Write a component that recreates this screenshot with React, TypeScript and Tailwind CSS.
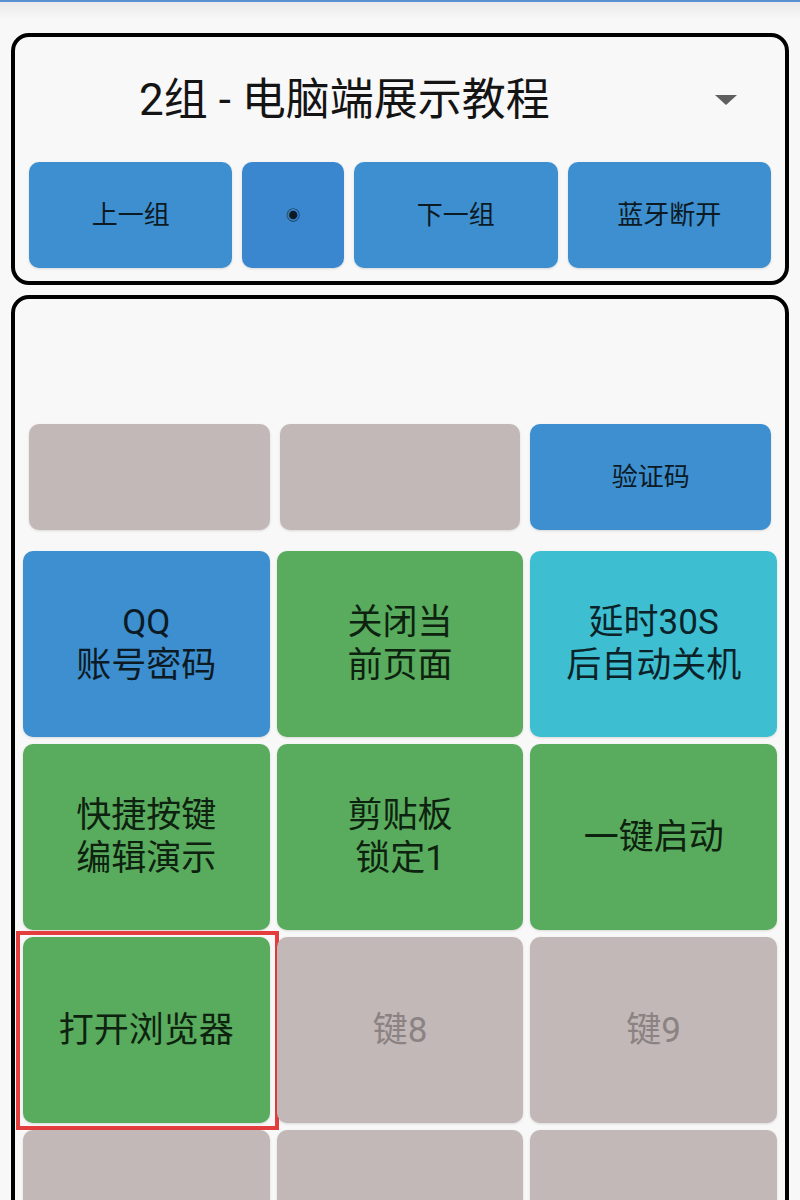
import React from 'react';

type Tile = {
    lines: string[];
    color: 'blue' | 'green' | 'cyan' | 'gray';
    marked?: boolean;
};

const tileColors: Record<Tile['color'], string> = {
    blue: 'bg-[#3d8fd0] text-[#0c1a24]',
    green: 'bg-[#59ab5d] text-[#0d220f]',
    cyan: 'bg-[#3ebfd1] text-[#0b2228]',
    gray: 'bg-[#c2b8b7] text-[#8b8383]',
};

const tiles: Tile[] = [
    { lines: ['QQ', '账号密码'], color: 'blue' },
    { lines: ['关闭当', '前页面'], color: 'green' },
    { lines: ['延时30S', '后自动关机'], color: 'cyan' },
    { lines: ['快捷按键', '编辑演示'], color: 'green' },
    { lines: ['剪贴板', '锁定1'], color: 'green' },
    { lines: ['一键启动'], color: 'green' },
    { lines: ['打开浏览器'], color: 'green', marked: true },
    { lines: ['键8'], color: 'gray' },
    { lines: ['键9'], color: 'gray' },
    // next row is only partly on screen
    { lines: [], color: 'gray' },
    { lines: [], color: 'gray' },
    { lines: [], color: 'gray' },
];

const font = { fontFamily: 'Roboto, "Noto Sans CJK SC", sans-serif' };

export default function App() {
    return (
        <div className="min-h-[1200px] bg-[#f8f8f8] overflow-hidden" style={font}>
            {/* status strip */}
            <div className="h-[2px] bg-[#5a8fd0]" />
            <div className="h-[18px] bg-gradient-to-b from-[#e9e9e9] to-[#f8f8f8]" />

            <div className="px-[11px] pt-[13px] flex flex-col gap-[10px]">
                {/* group selector */}
                <div className="border-4 border-black rounded-[18px] px-[14px] pb-[13px]">
                    <div className="h-[125px] flex items-center pl-[110px] pr-[34px]">
                        <span className="text-[44px] leading-none text-[#141414]">2组 - 电脑端展示教程</span>
                        <span className="ml-auto w-0 h-0 border-x-[11px] border-x-transparent border-t-[10px] border-t-[#5f5f5f]" />
                    </div>
                    <div className="flex gap-[10px] h-[106px] text-[26px] text-[#0c1a24]">
                        <button className="flex-[2] rounded-[10px] bg-[#3d8fd0] shadow-sm">上一组</button>
                        <button className="flex-1 rounded-[10px] bg-[#3a87cf] text-[14px] shadow-sm">◉</button>
                        <button className="flex-[2] rounded-[10px] bg-[#3d8fd0] shadow-sm">下一组</button>
                        <button className="flex-[2] rounded-[10px] bg-[#3d8fd0] shadow-sm">蓝牙断开</button>
                    </div>
                </div>

                {/* key board */}
                <div className="border-4 border-black rounded-[18px] pb-6">
                    <div className="px-[14px] pt-[125px]">
                        <div className="grid grid-cols-3 gap-[10px] h-[106px]">
                            <div className="rounded-[10px] bg-[#c2b8b7] shadow-sm" />
                            <div className="rounded-[10px] bg-[#c2b8b7] shadow-sm" />
                            <div className="rounded-[10px] bg-[#3d8fd0] shadow-sm flex items-center justify-center text-[26px] text-[#0c1a24]">
                                验证码
                            </div>
                        </div>
                    </div>
                    <div className="px-2 pt-[21px] grid grid-cols-3 gap-[7px] auto-rows-[186px]">
                        {tiles.map((t, i) => (
                            <div
                                key={i}
                                className={`relative rounded-[10px] shadow-sm flex flex-col items-center justify-center text-[35px] leading-[43px] ${tileColors[t.color]}`}
                            >
                                {t.lines.map((l) => (
                                    <span key={l}>{l}</span>
                                ))}
                                {t.marked && (
                                    <div className="absolute -left-[7px] -right-[9px] -top-[6px] -bottom-[7px] border-4 border-[#e43d3d]" />
                                )}
                            </div>
                        ))}
                    </div>
                </div>
            </div>
        </div>
    );
}
